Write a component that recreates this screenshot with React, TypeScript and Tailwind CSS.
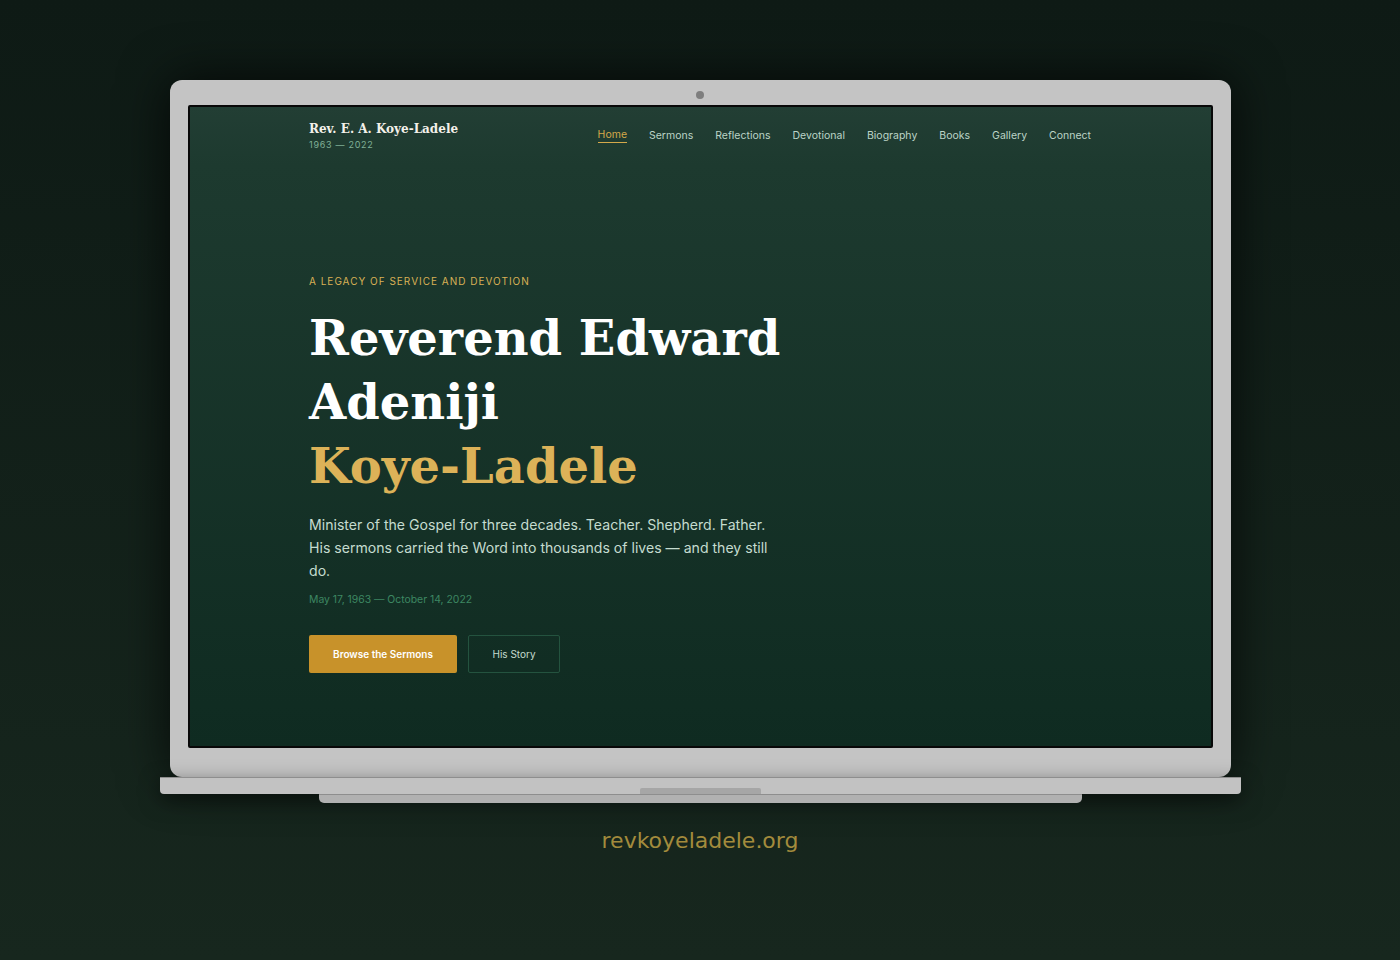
import React from "react";

const nav = ["Home", "Sermons", "Reflections", "Devotional", "Biography", "Books", "Gallery", "Connect"];

function Screen() {
  return (
    <div className="w-full h-full bg-[#12302a] overflow-hidden flex flex-col" style={{ fontFamily: "Inter, 'Noto Sans', sans-serif" }}>
      <header className="h-[58px] bg-gradient-to-b from-[#223e34] to-[#1d3a2f] shrink-0">
        <div className="w-[782px] mx-auto flex items-start justify-between pt-[14px]">
          <div className="flex flex-col">
            <span className="text-[12px] leading-[16px] font-bold text-[#f4f1ea]" style={{ fontFamily: "'DejaVu Serif', serif" }}>
              Rev. E. A. Koye-Ladele
            </span>
            <span className="text-[9px] leading-[12px] tracking-[0.08em] text-[#7fb097] mt-[2px]">1963 — 2022</span>
          </div>
          <nav className="flex items-center gap-[22px] pt-[7px]">
            {nav.map((n, i) => (
              <a
                key={n}
                className={
                  i === 0
                    ? "text-[10.5px] leading-[14px] text-[#d4a94a] border-b border-[#d4a94a]"
                    : "text-[10.5px] leading-[14px] text-[#bcd4c7]"
                }
              >
                {n}
              </a>
            ))}
          </nav>
        </div>
      </header>
      <section className="flex-1 bg-gradient-to-b from-[#1d3a2f] to-[#0f2b21]">
        <div className="w-[782px] mx-auto pt-[109px]">
          <p className="text-[10px] leading-[14px] tracking-[0.1em] text-[#d9b155] uppercase">A legacy of service and devotion</p>
          <h1 className="mt-[18px] text-[48px] leading-[64px] font-bold text-white" style={{ fontFamily: "'DejaVu Serif', serif" }}>
            Reverend Edward
            <br />
            Adeniji
            <br />
            <span className="text-[#dcb258]">Koye-Ladele</span>
          </h1>
          <p className="mt-[15px] w-[475px] text-[14.1px] leading-[23px] text-[#c5dccf]">
            Minister of the Gospel for three decades. Teacher. Shepherd. Father. His sermons carried the Word into thousands of lives — and they still do.
          </p>
          <p className="mt-[11px] text-[10.4px] leading-[14px] text-[#3d8762]">May 17, 1963 — October 14, 2022</p>
          <div className="mt-[28px] flex gap-[11px]">
            <button className="w-[148px] h-[38px] rounded-[2px] bg-[#c8922a] text-white text-[10px] font-semibold">Browse the Sermons</button>
            <button className="w-[92px] h-[38px] rounded-[2px] border border-[#24533f] text-[#c5dccf] text-[10px]">His Story</button>
          </div>
        </div>
      </section>
    </div>
  );
}

export default function App() {
  return (
    <div className="w-[1400px] h-[960px] bg-gradient-to-b from-[#0e1a15] to-[#17271e] flex flex-col items-center pt-[80px]">
      <div className="relative w-[1061px] h-[697px] bg-[#c4c4c4] rounded-[12px] pt-[25px] px-[18px] shadow-[0_0_50px_rgba(0,0,0,0.75)] z-10">
        <div className="absolute top-[11px] left-1/2 -translate-x-1/2 w-[8px] h-[8px] rounded-full bg-[#7e7e7e]" />
        <div className="w-[1025px] h-[643px] border-2 border-[#080808] rounded-[2px] overflow-hidden">
          <Screen />
        </div>
      </div>
      <div className="relative w-[1081px] h-[17px] bg-[#c2c2c2] border-t border-[#8e8e8e] rounded-b-[4px] flex justify-center items-end shadow-[0_6px_20px_rgba(0,0,0,0.5)] z-10">
        <div className="w-[121px] h-[6px] bg-[#a6a6a6] rounded-t-[2px]" />
      </div>
      <div className="relative z-20 w-[763px] h-[9px] bg-[#b1b1b1] border-t border-[#8e8e8e] rounded-b-[5px]" />
      <p className="mt-[25px] text-[22px] leading-[26px] text-[#a38b3c]" style={{ fontFamily: "'DejaVu Sans', sans-serif" }}>
        revkoyeladele.org
      </p>
    </div>
  );
}
